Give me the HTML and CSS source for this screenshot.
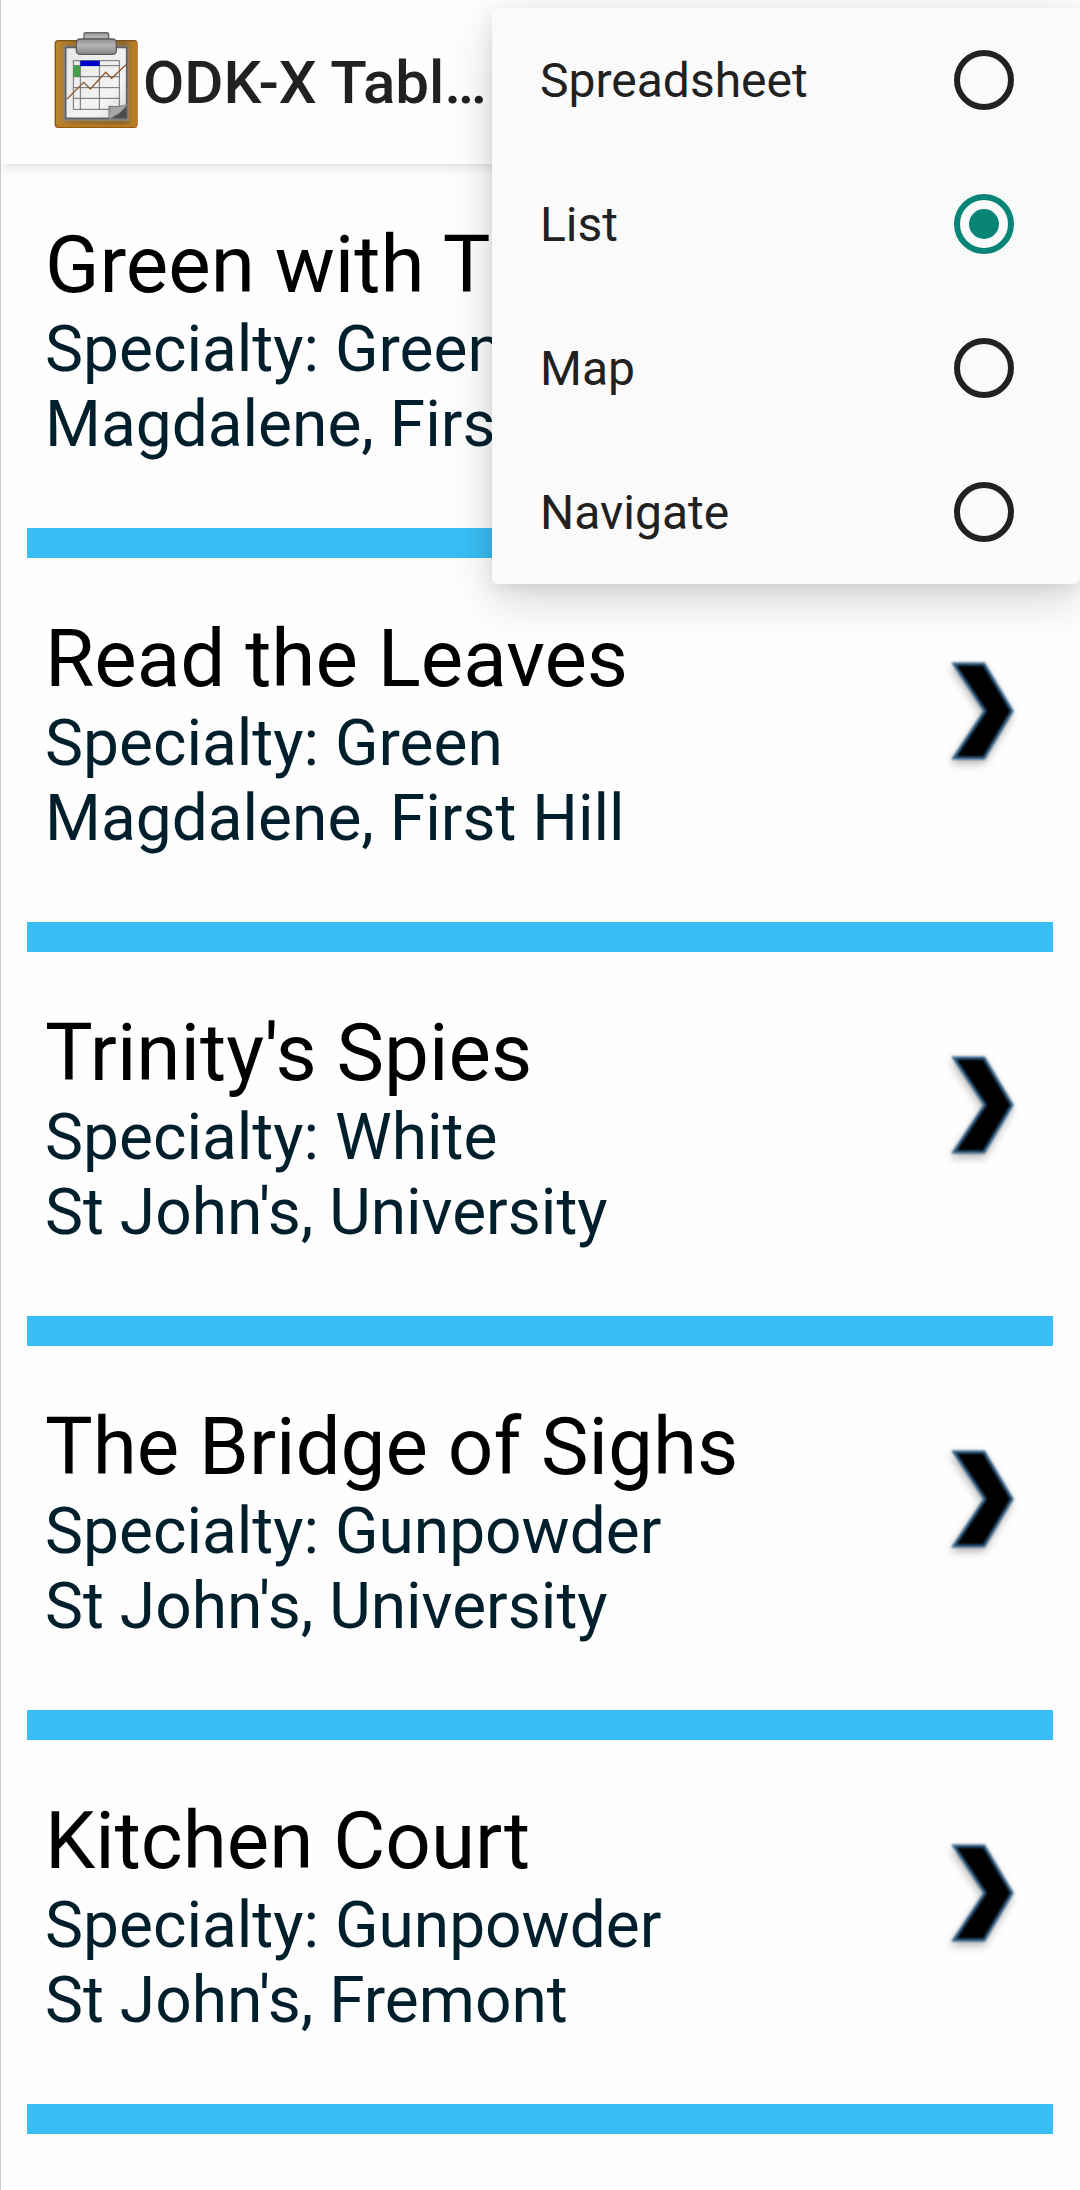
FILE: index.html
```
<!DOCTYPE html>
<html lang="en">
<head>
    <meta charset="UTF-8">
    <meta name="viewport" content="width=device-width, initial-scale=1.0">
    <title>ODK-X Tables</title>
    <link rel="stylesheet" href="styles.css">
</head>
<body>
    <header class="app-bar">
        <svg class="app-icon" viewBox="162 93 252 306" aria-hidden="true">
            <defs>
                <linearGradient id="board" x1="0" y1="0" x2="1" y2="0">
                    <stop offset="0" stop-color="#bf872f"/>
                    <stop offset="0.2" stop-color="#a1732c"/>
                    <stop offset="0.85" stop-color="#8f6a30"/>
                    <stop offset="1" stop-color="#c58726"/>
                </linearGradient>
                <linearGradient id="paper" x1="0" y1="0" x2="1" y2="1">
                    <stop offset="0" stop-color="#e6e6e8"/>
                    <stop offset="0.7" stop-color="#f4f4f5"/>
                    <stop offset="1" stop-color="#d5d5d8"/>
                </linearGradient>
                <linearGradient id="metal" x1="0" y1="0" x2="0" y2="1">
                    <stop offset="0" stop-color="#8c8c8c"/>
                    <stop offset="0.4" stop-color="#b8b6b4"/>
                    <stop offset="1" stop-color="#858585"/>
                </linearGradient>
                <linearGradient id="curl" x1="0" y1="0" x2="1" y2="1">
                    <stop offset="0" stop-color="#808080"/>
                    <stop offset="0.5" stop-color="#b5b5b5"/>
                    <stop offset="0.6" stop-color="#555"/>
                    <stop offset="1" stop-color="#222"/>
                </linearGradient>
            </defs>
            <!-- clipboard -->
            <rect x="166" y="122" width="245" height="260" rx="9" fill="url(#board)" stroke="#7d5117" stroke-width="4"/>
            <path d="M170 378h237V126" fill="none" stroke="#bf7a1c" stroke-width="8"/>
            <path d="M190 137h196v225H190z" fill="#8f8779"/>
            <path d="M197 142h183v213H197z" fill="url(#paper)" stroke="#5e6164" stroke-width="5"/>
            <!-- table -->
            <path d="M220 182h138v146H220zM241 182v146M298 182v146M220 197h138M220 230h138M220 263h138M220 295h138" fill="none" stroke="#6f6f6f" stroke-width="3"/>
            <path d="M220 197h21v33h-21z" fill="#43a04c"/>
            <path d="M241 182h58v16h-58z" fill="#0000c8"/>
            <path d="M201 297l50-50 20 20 46-50 18 18 43-41" fill="none" stroke="#8a5a30" stroke-width="4"/>
            <!-- folded corner -->
            <path d="M327 318c22 4 42 0 53-5v42h-53z" fill="url(#curl)" stroke="#777" stroke-width="3"/>
            <path d="M342 355c22-6 34-20 38-39v39z" fill="#4d4d4d"/>
            <path d="M332 350c22-3 34-16 43-31-14 5-27 5-42 3z" fill="#a5a5a5"/>
            <!-- clip -->
            <path d="M257 98h64q5 0 5 5v23h-74v-23q0-5 5-5z" fill="url(#metal)" stroke="#666" stroke-width="4"/>
            <rect x="229" y="117" width="120" height="46" rx="11" fill="url(#metal)" stroke="#5c5c5c" stroke-width="4"/>
        </svg>
        <h1 class="app-title">ODK-X Tabl…</h1>
    </header>

    <svg class="symbols" aria-hidden="true">
        <symbol id="chevron" viewBox="0 0 72 108">
            <path d="M7 7h30l28 47-28 47H7l31-47z"/>
        </symbol>
    </svg>

    <main>
        <ul class="list">
            <li>
                <a class="item" href="#">
                    <div class="info">
                        <h2>Green with T</h2>
                        <p>Specialty: Green</p>
                        <p>Magdalene, First Hill</p>
                    </div>
                    <svg class="chevron" aria-hidden="true"><use href="#chevron"/></svg>
                </a>
            </li>
            <li>
                <a class="item" href="#">
                    <div class="info">
                        <h2>Read the Leaves</h2>
                        <p>Specialty: Green</p>
                        <p>Magdalene, First Hill</p>
                    </div>
                    <svg class="chevron" aria-hidden="true"><use href="#chevron"/></svg>
                </a>
            </li>
            <li>
                <a class="item" href="#">
                    <div class="info">
                        <h2>Trinity's Spies</h2>
                        <p>Specialty: White</p>
                        <p>St John's, University</p>
                    </div>
                    <svg class="chevron" aria-hidden="true"><use href="#chevron"/></svg>
                </a>
            </li>
            <li>
                <a class="item" href="#">
                    <div class="info">
                        <h2>The Bridge of Sighs</h2>
                        <p>Specialty: Gunpowder</p>
                        <p>St John's, University</p>
                    </div>
                    <svg class="chevron" aria-hidden="true"><use href="#chevron"/></svg>
                </a>
            </li>
            <li>
                <a class="item" href="#">
                    <div class="info">
                        <h2>Kitchen Court</h2>
                        <p>Specialty: Gunpowder</p>
                        <p>St John's, Fremont</p>
                    </div>
                    <svg class="chevron" aria-hidden="true"><use href="#chevron"/></svg>
                </a>
            </li>
        </ul>
    </main>

    <form class="view-menu">
        <label for="spreadsheet">Spreadsheet <input type="radio" id="spreadsheet" name="view"></label>
        <label for="list">List <input type="radio" id="list" name="view" checked></label>
        <label for="map">Map <input type="radio" id="map" name="view"></label>
        <label for="navigate">Navigate <input type="radio" id="navigate" name="view"></label>
    </form>
</body>
</html>
```

FILE: styles.css
```
* {
    box-sizing: border-box;
}

body {
    position: relative;
    margin: 0;
    min-height: 100vh;
    border-left: 1px solid #ccc;
    background-color: #fefefe;
    font-family: Roboto, sans-serif;
}

h1, h2, p, ul {
    margin: 0;
    padding: 0;
}

.app-bar {
    position: relative;
    display: flex;
    align-items: center;
    gap: 5px;
    height: 164px;
    padding-left: 53px;
    background-color: #fefefe;
    box-shadow: 0 2px 12px rgba(0, 0, 0, 0.14);
}

.app-icon {
    width: 84px;
    height: 102px;
}

.app-title {
    font-size: 60px;
    font-weight: 500;
    color: #212121;
}

.symbols {
    display: none;
}

.list {
    margin: 0 27px 0 26px;
    list-style: none;
}

.item {
    display: flex;
    justify-content: space-between;
    align-items: flex-start;
    padding: 54px 34px 66px 18px;
    border-bottom: 30px solid #38bef5;
    color: #001f2d;
    text-decoration: none;
}

.info h2 {
    font-size: 80px;
    font-weight: 400;
    line-height: 94px;
    color: #000;
}

.info p {
    font-size: 64px;
    line-height: 75px;
}

.chevron {
    width: 72px;
    height: 108px;
    margin-top: 45px;
    stroke: #2f5c85;
    stroke-width: 3px;
    filter: blur(1px) drop-shadow(-1px 4px 4px rgba(0, 0, 0, 0.3));
}

/* Menu opened over the list */
.view-menu {
    position: absolute;
    top: 8px;
    right: 0;
    width: 588px;
    border-radius: 6px;
    background-color: #fafafa;
    box-shadow: 0 16px 48px rgba(0, 0, 0, 0.16), 0 4px 16px rgba(0, 0, 0, 0.08);
}

.view-menu label {
    display: flex;
    justify-content: space-between;
    align-items: center;
    height: 144px;
    padding: 0 66px 0 48px;
    font-size: 48px;
    color: #212121;
}

.view-menu input {
    appearance: none;
    width: 60px;
    height: 60px;
    margin: 0;
    border: 6px solid #212121;
    border-radius: 50%;
}

.view-menu input:checked {
    padding: 9px;
    border-color: #088577;
}

.view-menu input:checked::before {
    content: "";
    display: block;
    height: 100%;
    border-radius: 50%;
    background-color: #088577;
}
```
